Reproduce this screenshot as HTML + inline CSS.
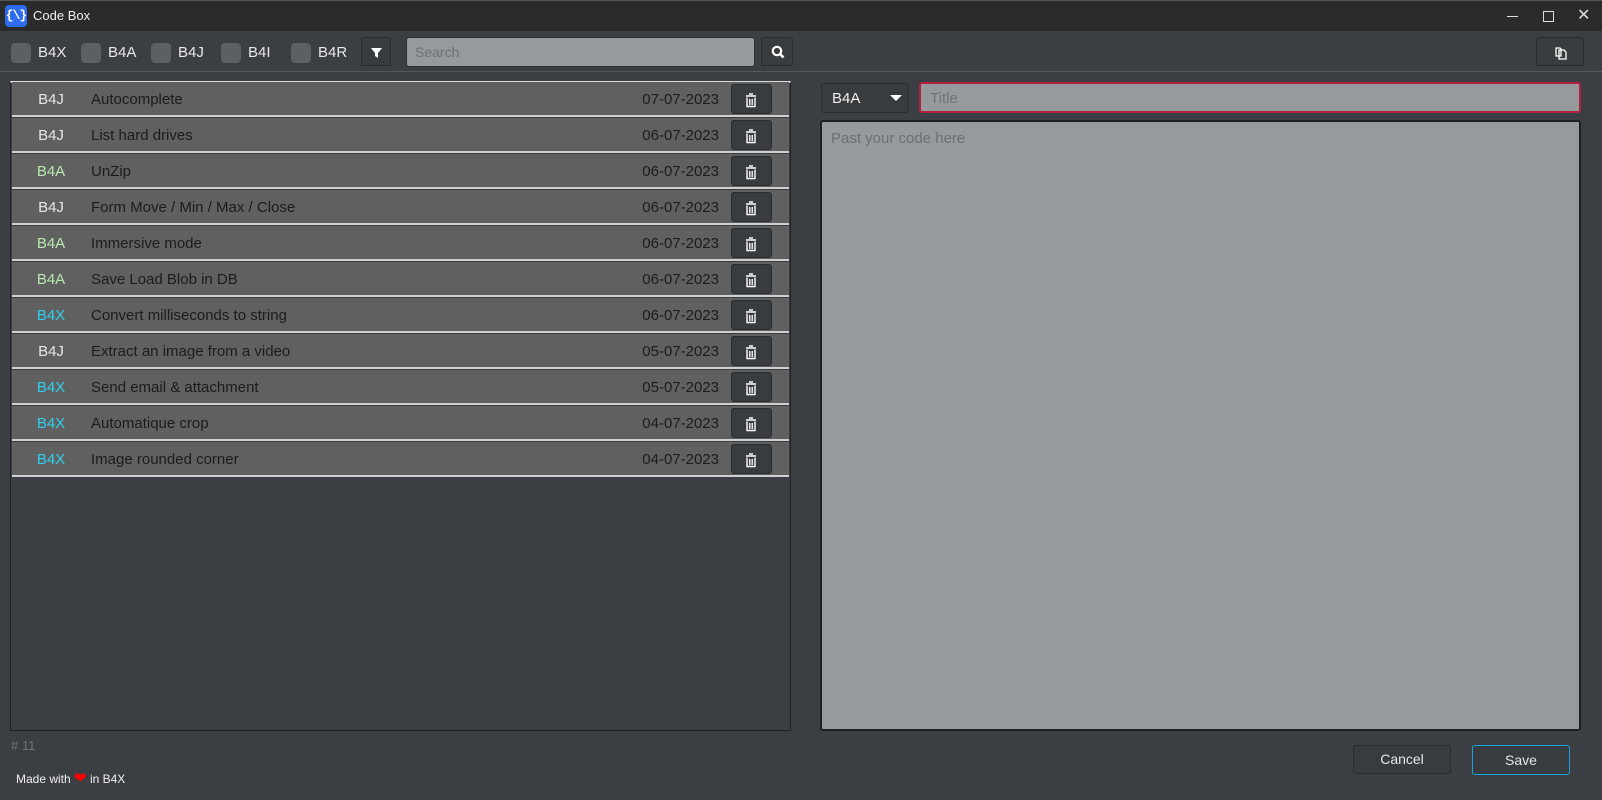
<!DOCTYPE html>
<html><head><meta charset="utf-8"><style>
*{box-sizing:border-box;margin:0;padding:0}
body{width:1602px;height:800px;background:#3b3f43;font-family:"Liberation Sans",sans-serif;position:relative;overflow:hidden;color:#ddd}
.abs{position:absolute}
.title{left:0;top:0;width:1602px;height:31px;background:#2b2b2b;border-top:1px solid #555}
.logo{left:5px;top:5px;width:22px;height:22px;background:#2d6cf0;border-radius:4px;color:#fff;font-size:13px;font-weight:bold;text-align:center;line-height:22px;font-family:"Liberation Mono",monospace;letter-spacing:-1px}
.cb{width:20px;height:20px;background:#5d6062;border-radius:4px;top:43px}
.lbl{top:44px;font-size:15px;color:#e8e8e8}
.btn{background:#393c3f;border:1px solid #2a2c2e;border-radius:3px}
.row{position:absolute;left:12px;width:777px;height:35px;background:#606060;border-bottom:2px solid #cfcfcf}
.row .t{position:absolute;top:9px;font-size:15px}
.row .ty{left:0;width:78px;text-align:center}
.row .nm{left:79px;color:#1c1c1c}
.row .dt{right:70px;color:#1c1c1c}
.row .tr{position:absolute;left:719px;top:2px;width:41px;height:30px;background:#393c3f;border:1px solid #2a2c2e;border-radius:3px}
.j{color:#e6e6e6}.a{color:#b9e8b0}.x{color:#2ed0ef}
</style></head><body>
<div class="abs title"></div>
<div class="abs logo">{\}</div>
<div class="abs" style="left:33px;top:8px;font-size:13px;color:#eee">Code Box</div>
<div class="abs" style="left:1507px;top:16px;width:11px;height:1px;background:#ddd"></div>
<div class="abs" style="left:1543px;top:11px;width:11px;height:11px;border:1px solid #ddd"></div>
<div class="abs" style="left:1577px;top:5px;font-size:16px;color:#ddd">✕</div>
<div class="abs" style="left:0;top:71px;width:1602px;height:1px;background:#55595c"></div>

<div class="abs cb" style="left:11px"></div><div class="abs lbl" style="left:38px">B4X</div>
<div class="abs cb" style="left:81px"></div><div class="abs lbl" style="left:108px">B4A</div>
<div class="abs cb" style="left:151px"></div><div class="abs lbl" style="left:178px">B4J</div>
<div class="abs cb" style="left:221px"></div><div class="abs lbl" style="left:248px">B4I</div>
<div class="abs cb" style="left:291px"></div><div class="abs lbl" style="left:318px">B4R</div>
<div class="abs btn" style="left:361px;top:37px;width:30px;height:29px"><svg width="30" height="29" viewBox="0 0 30 29"><path d="M9 10h11l-4 5v5l-3-2v-3z" fill="#fff"/></svg></div>
<div class="abs" style="left:406px;top:37px;width:349px;height:30px;background:#979a9c;border:1px solid #2e3032;border-radius:3px;font-size:14px;color:#6d7073;padding:6px 8px">Search</div>
<div class="abs btn" style="left:761px;top:37px;width:32px;height:29px"><svg width="32" height="29" viewBox="0 0 32 29"><circle cx="15" cy="13" r="4.2" stroke="#fff" stroke-width="2.2" fill="none"/><path d="M18 16l3.5 3.5" stroke="#fff" stroke-width="2.6"/></svg></div>
<div class="abs btn" style="left:1536px;top:37px;width:48px;height:29px"><svg width="48" height="29" viewBox="0 0 48 29"><path d="M19 10h4l1 1v7h-5v-7zM22 12h5l2 2v7h-7z" stroke="#fff" stroke-width="1.3" fill="#393c3f"/></svg></div>

<div class="abs" style="left:10px;top:81px;width:781px;height:650px;border:1px solid #222;border-top:2px solid #ddd;background:#3b3f43"></div>
<div class="row" style="top:82px"><span class="t ty j">B4J</span><span class="t nm">Autocomplete</span><span class="t dt">07-07-2023</span><div class="tr"></div></div>
<div class="row" style="top:118px"><span class="t ty j">B4J</span><span class="t nm">List hard drives</span><span class="t dt">06-07-2023</span><div class="tr"></div></div>
<div class="row" style="top:154px"><span class="t ty a">B4A</span><span class="t nm">UnZip</span><span class="t dt">06-07-2023</span><div class="tr"></div></div>
<div class="row" style="top:190px"><span class="t ty j">B4J</span><span class="t nm">Form Move / Min / Max / Close</span><span class="t dt">06-07-2023</span><div class="tr"></div></div>
<div class="row" style="top:226px"><span class="t ty a">B4A</span><span class="t nm">Immersive mode</span><span class="t dt">06-07-2023</span><div class="tr"></div></div>
<div class="row" style="top:262px"><span class="t ty a">B4A</span><span class="t nm">Save Load Blob in DB</span><span class="t dt">06-07-2023</span><div class="tr"></div></div>
<div class="row" style="top:298px"><span class="t ty x">B4X</span><span class="t nm">Convert milliseconds to string</span><span class="t dt">06-07-2023</span><div class="tr"></div></div>
<div class="row" style="top:334px"><span class="t ty j">B4J</span><span class="t nm">Extract an image from a video</span><span class="t dt">05-07-2023</span><div class="tr"></div></div>
<div class="row" style="top:370px"><span class="t ty x">B4X</span><span class="t nm">Send email &amp; attachment</span><span class="t dt">05-07-2023</span><div class="tr"></div></div>
<div class="row" style="top:406px"><span class="t ty x">B4X</span><span class="t nm">Automatique crop</span><span class="t dt">04-07-2023</span><div class="tr"></div></div>
<div class="row" style="top:442px"><span class="t ty x">B4X</span><span class="t nm">Image rounded corner</span><span class="t dt">04-07-2023</span><div class="tr"></div></div>
<svg class="abs" style="left:0;top:0" width="800" height="500">
<defs><g id="tc"><path d="M-5 -4h10M-2 -6h4" stroke="#fff" stroke-width="1.6"/><path d="M-4 -2.5v9h8v-9" stroke="#fff" stroke-width="1.4" fill="none"/><path d="M-1.6 -1v6M0 -1v6M1.6 -1v6" stroke="#fff" stroke-width=".9"/></g></defs>
<use href="#tc" x="751" y="100"/><use href="#tc" x="751" y="136"/><use href="#tc" x="751" y="172"/><use href="#tc" x="751" y="208"/><use href="#tc" x="751" y="244"/><use href="#tc" x="751" y="280"/><use href="#tc" x="751" y="316"/><use href="#tc" x="751" y="352"/><use href="#tc" x="751" y="388"/><use href="#tc" x="751" y="424"/><use href="#tc" x="751" y="460"/>
</svg>

<div class="abs btn" style="left:821px;top:83px;width:88px;height:30px;font-size:15px;color:#eee;padding:6px 10px">B4A<svg class="abs" style="left:68px;top:11px" width="12" height="7"><path d="M0 0h12l-6 6z" fill="#fff"/></svg></div>
<div class="abs" style="left:919px;top:82px;width:662px;height:31px;background:#979a9c;border:2px solid #b5203e;border-radius:3px;font-size:15px;color:#717477;padding:6px 9px">Title</div>
<div class="abs" style="left:820px;top:120px;width:761px;height:611px;background:#979a9c;border:2px solid #1e1f20;border-radius:3px;font-size:15px;color:#6d7073;padding:8px 9px">Past your code here</div>

<div class="abs" style="left:11px;top:738px;font-size:13px;color:#6e7275"># 11</div>
<div class="abs" style="left:16px;top:772px;font-size:12px;color:#f0f0f0">Made with <span style="color:#f00;font-size:15px;line-height:12px">❤</span> in B4X</div>
<div class="abs btn" style="left:1353px;top:745px;width:98px;height:29px;font-size:14px;color:#e6e6e6;text-align:center;line-height:27px">Cancel</div>
<div class="abs" style="left:1472px;top:745px;width:98px;height:30px;font-size:14px;color:#e6e6e6;text-align:center;line-height:28px;background:#393c3f;border:1px solid #1aa3d9;border-radius:3px">Save</div>
</body></html>
